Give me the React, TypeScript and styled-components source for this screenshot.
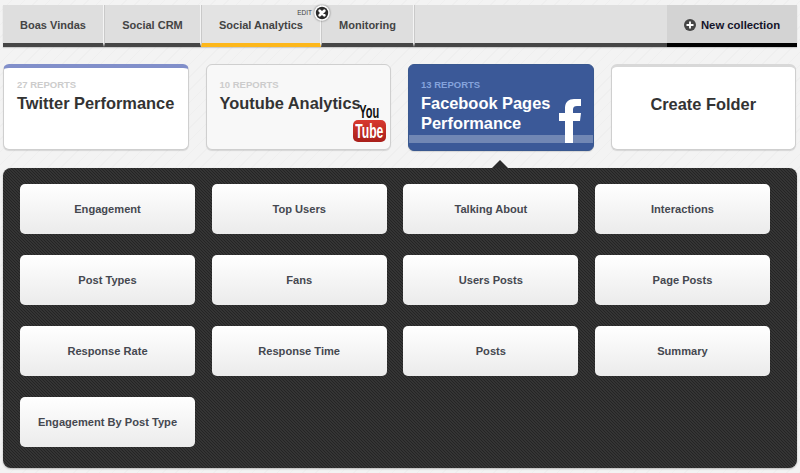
import styled, { createGlobalStyle, css } from 'styled-components';

const GlobalStyle = createGlobalStyle`
  html, body {
    margin: 0;
    padding: 0;
    background-color: #f3f3f3;
    background-image: repeating-linear-gradient(
      135deg,
      transparent 0,
      transparent 8px,
      #efefef 8px,
      #efefef 9px
    );
    font-family: 'Liberation Sans', Arial, sans-serif;
  }
  * {
    box-sizing: border-box;
  }
`;

const Page = styled.div`
  width: 800px;
  height: 473px;
  padding: 5px 3px 0;
  overflow: hidden;
`;

const TabBar = styled.nav`
  display: flex;
  height: 42px;
  background: #e0e0e0;
  box-shadow: 0 1px 1px rgba(0, 0, 0, 0.15);
`;

const Tab = styled.div<{ $width: number; $active?: boolean }>`
  position: relative;
  display: flex;
  align-items: center;
  justify-content: center;
  width: ${p => p.$width}px;
  padding-top: 2px;
  border-right: 1px solid #f4f4f4;
  border-left: 1px solid #c9c9c9;
  border-bottom: 4px solid ${p => (p.$active ? '#fdb71b' : '#464646')};
  background: ${p => (p.$active ? '#e3e3e3' : '#dedede')};
  color: #444444;
  font-size: 11px;
  font-weight: bold;
  &:first-child {
    border-left: none;
  }
`;

const TabFill = styled.div`
  flex: 1;
  border-left: 1px solid #c9c9c9;
  border-bottom: 4px solid #464646;
  background: #e0e0e0;
`;

const NewCollection = styled.div`
  display: flex;
  align-items: center;
  justify-content: center;
  gap: 5px;
  width: 130px;
  padding-top: 1px;
  border-bottom: 4px solid #000000;
  background: #d3d3d3;
  color: #14142a;
  font-size: 11.3px;
  font-weight: bold;
`;

const EditLabel = styled.span`
  position: absolute;
  top: 4px;
  right: 8px;
  color: #444444;
  font-size: 6.5px;
  font-weight: normal;
`;

const EditBadge = styled.span`
  position: absolute;
  top: 0;
  right: -10px;
  z-index: 2;
  display: flex;
  width: 16px;
  height: 16px;
  border-radius: 50%;
  box-shadow: 0 0 2px rgba(0, 0, 0, 0.5);
`;

const Cards = styled.section`
  display: grid;
  grid-template-columns: repeat(4, 185.5px);
  column-gap: 17px;
  align-items: start;
  margin-top: 17px;
`;

const cardBase = css`
  position: relative;
  height: 86px;
  border-radius: 6px;
  overflow: hidden;
  border: 1px solid #cfcfcf;
  box-shadow: 0 1px 1px rgba(0, 0, 0, 0.12);
`;

const Card = styled.article<{ $accent?: boolean; $muted?: boolean }>`
  ${cardBase}
  padding: ${p => (p.$accent ? '12px' : '15px')} 13px 0;
  background: ${p => (p.$muted ? '#f8f8f8' : '#ffffff')};
  border-top: ${p => (p.$accent ? '4px solid #818fca' : '1px solid #cfcfcf')};
`;

const FacebookCard = styled.article`
  ${cardBase}
  height: 87px;
  padding: 15px 12px 0;
  border-color: #39588f;
  background: #3b5998;
`;

const FolderCard = styled.article`
  ${cardBase}
  display: flex;
  align-items: center;
  justify-content: center;
  border-top-width: 3px;
  border-top-color: #d8d8d8;
  background: #ffffff;
`;

const CardCount = styled.div<{ $light?: boolean }>`
  color: ${p => (p.$light ? '#85a3dc' : '#cccccc')};
  font-size: 9.5px;
  font-weight: bold;
  line-height: 10px;
`;

const CardTitle = styled.h2<{ $light?: boolean }>`
  position: relative;
  z-index: 1;
  margin: 4px 0 0;
  color: ${p => (p.$light ? '#ffffff' : '#333333')};
  font-size: 16.4px;
  font-weight: bold;
  line-height: 19.5px;
  white-space: nowrap;
`;

const FolderTitle = styled(CardTitle)`
  margin: 0 0 7px;
`;

const FacebookBand = styled.div`
  position: absolute;
  left: 0;
  right: 0;
  bottom: 7px;
  height: 8px;
  background: rgba(255, 255, 255, 0.28);
`;

const FacebookMark = styled.svg`
  position: absolute;
  right: 11px;
  bottom: 7px;
`;

const YoutubeLogo = styled.div`
  position: absolute;
  right: 4px;
  bottom: 7px;
  z-index: 2;
  display: flex;
  flex-direction: column;
  align-items: center;
  width: 33px;
`;

const YouWord = styled.span`
  display: block;
  margin-bottom: 1px;
  color: #111111;
  font-size: 19px;
  font-weight: bold;
  line-height: 15px;
  transform: scaleX(0.58);
`;

const TubeWord = styled.span`
  display: flex;
  align-items: center;
  justify-content: center;
  width: 33px;
  height: 22px;
  border-radius: 5px;
  background: linear-gradient(#d8392f, #a81f1a);
  color: #ffffff;
  font-size: 21px;
  font-weight: bold;
  line-height: 22px;
  > span {
    display: block;
    transform: scaleX(0.58);
  }
`;

const Panel = styled.section`
  position: relative;
  display: grid;
  grid-template-columns: repeat(4, 175px);
  grid-auto-rows: 50px;
  gap: 21px 16.67px;
  align-content: start;
  height: 300px;
  margin-top: 17px;
  padding: 16px 17px;
  border-radius: 8px;
  background-color: #242424;
  background-image: linear-gradient(
    45deg,
    #343434 25%,
    transparent 25%,
    transparent 50%,
    #343434 50%,
    #343434 75%,
    transparent 75%
  );
  background-size: 3px 3px;
  box-shadow: 0 1px 2px rgba(0, 0, 0, 0.25);
  &::before {
    content: '';
    position: absolute;
    top: -8px;
    left: 489px;
    border-left: 8px solid transparent;
    border-right: 8px solid transparent;
    border-bottom: 8px solid #2b2b2b;
  }
`;

const ReportButton = styled.div`
  display: flex;
  align-items: center;
  justify-content: center;
  border-radius: 5px;
  background: linear-gradient(#ffffff, #ebebeb);
  color: #454850;
  font-size: 11.1px;
  font-weight: bold;
`;

const reports = [
  'Engagement',
  'Top Users',
  'Talking About',
  'Interactions',
  'Post Types',
  'Fans',
  'Users Posts',
  'Page Posts',
  'Response Rate',
  'Response Time',
  'Posts',
  'Summary',
  'Engagement By Post Type',
];

const App = () => {
  return (
    <Page>
      <GlobalStyle />
      <TabBar>
        <Tab $width={101}>Boas Vindas</Tab>
        <Tab $width={97}>Social CRM</Tab>
        <Tab $width={120} $active>
          Social Analytics
          <EditLabel>EDIT</EditLabel>
          <EditBadge>
            <svg width="16" height="16" viewBox="0 0 16 16">
              <circle cx="8" cy="8" r="7.5" fill="#ffffff" />
              <circle cx="8" cy="8" r="6.2" fill="#2c2c2c" />
              <path
                d="M5.7 5.7 L10.3 10.3 M10.3 5.7 L5.7 10.3"
                stroke="#ffffff"
                strokeWidth="2.8"
                strokeLinecap="round"
              />
            </svg>
          </EditBadge>
        </Tab>
        <Tab $width={93}>Monitoring</Tab>
        <TabFill />
        <NewCollection>
          <svg width="12" height="12" viewBox="0 0 12 12">
            <circle cx="6" cy="6" r="6" fill="#444444" />
            <path d="M6 2.5 V9.5 M2.5 6 H9.5" stroke="#ffffff" strokeWidth="1.8" />
          </svg>
          New collection
        </NewCollection>
      </TabBar>

      <Cards>
        <Card $accent>
          <CardCount>27 REPORTS</CardCount>
          <CardTitle>Twitter Performance</CardTitle>
        </Card>
        <Card $muted>
          <CardCount>10 REPORTS</CardCount>
          <CardTitle>Youtube Analytics</CardTitle>
          <YoutubeLogo>
            <YouWord>You</YouWord>
            <TubeWord>
              <span>Tube</span>
            </TubeWord>
          </YoutubeLogo>
        </Card>
        <FacebookCard>
          <CardCount $light>13 REPORTS</CardCount>
          <CardTitle $light>
            Facebook Pages
            <br />
            Performance
          </CardTitle>
          <FacebookBand />
          <FacebookMark width="23" height="44" viewBox="0 0 23 44">
            <path
              fill="#ffffff"
              d="M6 44 V22 H0 V14 H6 V9 C6 3 10 0 15 0 H22 V7 H18 C15.5 7 14 8 14 10.5 V14 H22 L21 22 H14 V44 Z"
            />
          </FacebookMark>
        </FacebookCard>
        <FolderCard>
          <FolderTitle>Create Folder</FolderTitle>
        </FolderCard>
      </Cards>

      <Panel>
        {reports.map(name => (
          <ReportButton key={name}>{name}</ReportButton>
        ))}
      </Panel>
    </Page>
  );
};

export default App;
